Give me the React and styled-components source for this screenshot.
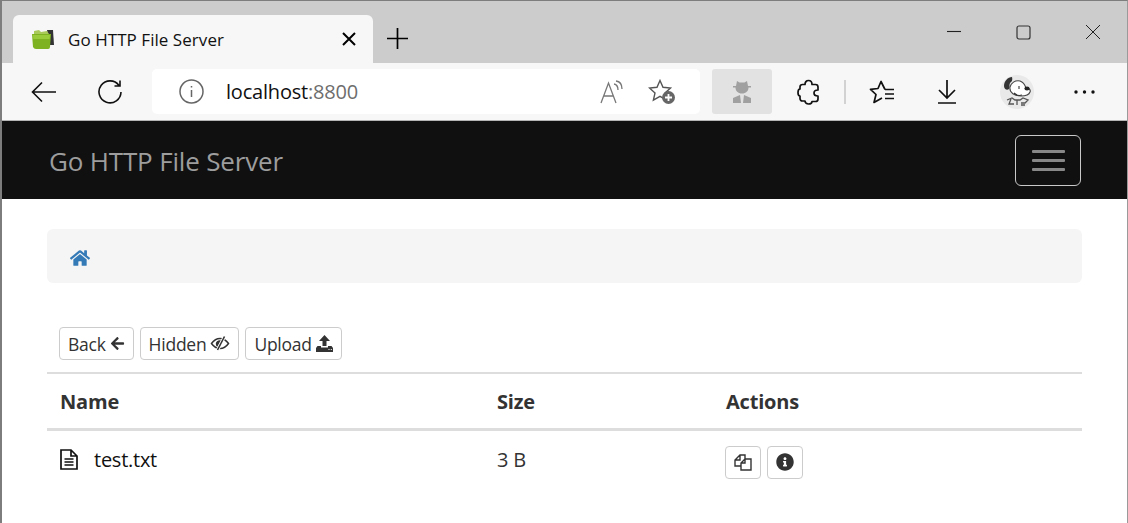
import React from 'react';
import styled, { createGlobalStyle } from 'styled-components';
import { FaHome, FaArrowLeft, FaInfoCircle } from 'react-icons/fa';

const Global = createGlobalStyle`
  html, body { margin: 0; padding: 0; background: #fff; }
  body { font-family: "Open Sans", "Noto Sans", sans-serif; overflow: hidden; }
`;

const Win = styled.div`
  width: 1128px;
  height: 523px;
  box-sizing: border-box;
  border-left: 2px solid #7d7d7d;
  border-top: 1px solid #7d7d7d;
  border-right: 1px solid #9a9a9a;
  display: flex;
  flex-direction: column;
  overflow: hidden;
`;

const TabStrip = styled.div`
  height: 62px;
  flex: none;
  background: #cccccc;
  display: flex;
  align-items: flex-end;
  padding-left: 11px;
  box-sizing: border-box;
`;

const Tab = styled.div`
  width: 360px;
  height: 48px;
  background: #f7f7f7;
  border-radius: 6px 6px 0 0;
  display: flex;
  align-items: center;
  padding: 0 17px 0 18px;
  box-sizing: border-box;
`;

const TabTitle = styled.span`
  flex: 1;
  margin-left: 13px;
  font-size: 17px;
  letter-spacing: 0.05px;
  color: #111;
`;

const NewTab = styled.div`
  margin: 0 0 7px 14px;
  height: 36px;
  display: flex;
  align-items: center;
`;

const WinControls = styled.div`
  margin-left: auto;
  align-self: flex-start;
  display: flex;
  gap: 54px;
  padding: 23px 26px 0 0;
  align-items: center;
`;

const Toolbar = styled.div`
  height: 57px;
  flex: none;
  background: #f7f7f7;
  border-bottom: 1px solid #b5b5b5;
  display: flex;
  align-items: center;
`;

const NavIcons = styled.div`
  width: 150px;
  flex: none;
  display: flex;
  align-items: center;
  gap: 40px;
  padding-left: 29px;
  box-sizing: border-box;
`;

const Address = styled.div`
  width: 548px;
  height: 45px;
  background: #fff;
  border-radius: 5px;
  display: flex;
  align-items: center;
  padding: 0 25px 0 27px;
  box-sizing: border-box;
`;

const Url = styled.span`
  flex: 1;
  margin-left: 22px;
  font-size: 20px;
  letter-spacing: -0.2px;
  color: #111;
  & > em { font-style: normal; color: #6d6d6d; }
`;

const AddrIcons = styled.div`
  display: flex;
  gap: 24px;
  align-items: center;
`;

const Incognito = styled.div`
  width: 60px;
  height: 45px;
  margin-left: 12px;
  background: #e2e2e2;
  border-radius: 3px;
  display: flex;
  align-items: center;
  justify-content: center;
`;

const ToolIcons = styled.div`
  display: flex;
  align-items: center;
  margin-left: 25px;
`;

const Divider = styled.div`
  width: 2px;
  height: 24px;
  background: #d2d2d2;
  margin: 0 23px 0 23px;
`;

const ToolSlot = styled.span`
  display: flex;
  align-items: center;
  margin-left: ${p => p.$ml};
`;

const Navbar = styled.div`
  height: 78px;
  flex: none;
  background: #101010;
  display: flex;
  align-items: center;
  justify-content: space-between;
  padding: 0 46px 0 47px;
`;

const Brand = styled.a`
  margin-top: 2px;
  font-size: 26px;
  letter-spacing: -0.17px;
  color: #9d9d9d;
`;

const Toggle = styled.div`
  width: 66px;
  height: 51px;
  box-sizing: border-box;
  border: 1px solid #c8c8c8;
  border-radius: 6px;
  display: flex;
  flex-direction: column;
  justify-content: center;
  align-items: center;
  gap: 6px;
`;

const Bar = styled.span`
  width: 33px;
  height: 3px;
  border-radius: 1px;
  background: #888;
`;

const Content = styled.div`
  padding: 30px 45px 0;
  flex: 1;
`;

const Crumb = styled.div`
  height: 54px;
  box-sizing: border-box;
  padding: 4px 0 0 23px;
  border-radius: 6px;
  background: #f5f5f5;
  display: flex;
  align-items: center;
  color: #337ab7;
`;

const Actions = styled.div`
  display: flex;
  gap: 6px;
  margin: 44px 0 12px 12px;
`;

const Btn = styled.div`
  height: 33px;
  box-sizing: border-box;
  border: 1px solid #ccc;
  border-radius: 4px;
  background: #fff;
  color: #333;
  font-size: 17.5px;
  letter-spacing: -0.25px;
  display: flex;
  align-items: center;
  gap: 4px;
  padding: 0 8px;
`;

const IconBtn = styled(Btn)`
  width: 36px;
  padding: 0;
  justify-content: center;
`;

const Row = styled.div`
  display: grid;
  grid-template-columns: 437px 229px 1fr;
  align-items: center;
  padding-left: 13px;
  color: #333;
`;

const HeadRow = styled(Row)`
  height: 59px;
  box-sizing: border-box;
  border-top: 2px solid #ddd;
  border-bottom: 3px solid #ddd;
  font-weight: 700;
  font-size: 20px;
  letter-spacing: -0.2px;
`;

const BodyRow = styled(Row)`
  height: 60px;
  font-size: 20px;
  letter-spacing: -0.25px;
`;

const FileName = styled.div`
  display: flex;
  align-items: center;
  gap: 16px;
  padding-bottom: 4px;
  color: #111;
`;

const FileSize = styled.span`
  padding-bottom: 4px;
`;

const Ops = styled.div`
  display: flex;
  gap: 6px;
  margin-left: -1px;
  padding-top: 2px;
`;

const Line = styled.svg.attrs({ fill: 'none', stroke: 'currentColor' })`
  display: block;
  flex: none;
`;

const Solid = styled.svg`
  display: block;
  flex: none;
  fill: currentColor;
`;

const Favicon = () => (
  <svg width="24" height="22" viewBox="0 0 24 22">
    <path d="M16 2h6l1 15h-4z" fill="#333" />
    <path d="M3 3l5-1 2 2 6-1 2 3H3z" fill="#a9c95a" />
    <path d="M1 6h19l-1 13q0 2-2 2H5q-2 0-3-2z" fill="#7fb223" />
    <path d="M2 7h17l-.3 4H2.300z" fill="#9acb3a" />
  </svg>
);

const Snoopy = () => (
  <svg width="34" height="34" viewBox="0 0 34 34">
    <circle cx="17" cy="17" r="17" fill="#e9e9e9" />
    <path d="M10 12c1-4 5-7 10-6 3 1 5 4 6 7 3 0 5 2 4 4-1 3-5 4-9 4-6 0-12-3-11-9z" fill="#fff" stroke="#444" strokeWidth="1.100" />
    <path d="M12 2c-4 0-8 4-8 9 0 3 3 5 5 3 1-2 0-4 1-6 1-1 3-2 2-6z" fill="#333" />
    <ellipse cx="27" cy="13.500" rx="2.600" ry="1.900" fill="#222" />
    <path d="M19 11v3M14 18c2 2 5 3 8 2" fill="none" stroke="#333" strokeWidth="1.100" />
    <path d="M7 25l5-2 3 2 5 0 3-2 5 2-3 3h-4M11 24l-2 5h5M17 25v5M25 30h-4" fill="none" stroke="#555" strokeWidth="1.300" />
  </svg>
);

const App = () => (
  <Win>
    <Global />
    <TabStrip>
      <Tab>
        <Favicon />
        <TabTitle>Go HTTP File Server</TabTitle>
        <Line width="14" height="14" viewBox="0 0 14 14" strokeWidth="2"><path d="M1 1l12 12M13 1L1 13" /></Line>
      </Tab>
      <NewTab>
        <Line width="21" height="21" viewBox="0 0 21 21" strokeWidth="1.700"><path d="M10.500 0v21M0 10.500h21" /></Line>
      </NewTab>
      <WinControls>
        <Line width="16" height="16" viewBox="0 0 16 16" strokeWidth="1.100" color="#222"><path d="M1 7.500h14" /></Line>
        <Line width="15" height="15" viewBox="0 0 15 15" strokeWidth="1.200" color="#333"><rect x="1" y="1" width="13" height="13" rx="2" /></Line>
        <Line width="16" height="16" viewBox="0 0 16 16" strokeWidth="1" color="#222"><path d="M1 1l14 14M15 1L1 15" /></Line>
      </WinControls>
    </TabStrip>
    <Toolbar>
      <NavIcons>
        <Line width="26" height="22" viewBox="0 0 26 22" strokeWidth="1.600" color="#111"><path d="M25 11H2M11 1.500L1.500 11l9.500 9.500" /></Line>
        <Line width="26" height="26" viewBox="0 0 26 26" strokeWidth="1.600" color="#111"><path d="M22 6.500A11 11 0 1 0 24 13M23 1.500V7h-5.500" /></Line>
      </NavIcons>
      <Address>
        <Line width="25" height="25" viewBox="0 0 25 25" strokeWidth="1.500" color="#666"><circle cx="12.500" cy="12.500" r="11.500" /><path d="M12.500 11v7M12.500 7v1.600" /></Line>
        <Url>localhost<em>:8800</em></Url>
        <AddrIcons>
          <Line width="24" height="24" viewBox="0 0 24 24" strokeWidth="1.300" color="#777"><path d="M1 23L8.500 3 16 23M3.500 16h10M14 4c3 .5 4 3 4 6M16 1c4 .5 6 4 6 8" /></Line>
          <svg width="27" height="25" viewBox="0 0 27 25">
            <path d="M12 1.500l3 6.800 7.500.7-5.500 5 1.600 7.200-6.600-3.800-6.600 3.800 1.600-7.200-5.500-5 7.500-.7z" fill="none" stroke="#555" strokeWidth="1.400" />
            <circle cx="20.500" cy="18.500" r="6.500" fill="#666" />
            <path d="M20.500 15v7M17 18.500h7" stroke="#fff" strokeWidth="1.800" />
          </svg>
        </AddrIcons>
      </Address>
      <Incognito>
        <Solid width="22" height="24" viewBox="0 0 22 24" color="#a0a0a0">
          <path d="M6 1l2.500 1.500h5L16 1l1 5h3v1.500h-2.500c0 3.500-2.500 6-6.500 6s-6.500-2.500-6.500-6H2V6h3zM2 23v-5l7-3 1 8zM20 23v-5l-7-3-1 8z" />
        </Solid>
      </Incognito>
      <ToolIcons>
        <Line width="24" height="26" viewBox="0 0 24 26" strokeWidth="1.700" strokeLinejoin="round" color="#111">
          <path d="M8 5.500C8 3 9.500 1.500 11.500 1.500S15 3 15 5.500h3.500c1.500 0 2.500 1 2.500 2.500v3c-2.500 0-4 1-4 3s1.500 3 4 3v3c0 1.500-1 2.500-2.500 2.500H15c0 1.500-1.500 2.500-3.500 2.500S8 23.500 8 22H5.500C4 22 3 21 3 19.500V17c-1 0-2-1.500-2-3.500S2 10 3 10V8c0-1.500 1-2.500 2.500-2.500z" />
        </Line>
        <Divider />
        <Line width="26" height="24" viewBox="0 0 26 24" strokeWidth="1.700" strokeLinejoin="round" color="#111"><path d="M16 9.500L12 1.500 9 8.500 1.500 9.300 7 14.500 5 22.500 13 18M16 9.500h9M16 14h9M16 18.500h9" /></Line>
        <ToolSlot $ml="42px">
          <Line width="20" height="25" viewBox="0 0 20 25" strokeWidth="1.700" color="#111"><path d="M10 1v18M2 11l8 8 8-8M1 24h18" /></Line>
        </ToolSlot>
        <ToolSlot $ml="43px"><Snoopy /></ToolSlot>
        <ToolSlot $ml="40px">
          <Solid width="21" height="4" viewBox="0 0 21 4" color="#111"><circle cx="2" cy="2" r="1.700" /><circle cx="10.500" cy="2" r="1.700" /><circle cx="19" cy="2" r="1.700" /></Solid>
        </ToolSlot>
      </ToolIcons>
    </Toolbar>
    <Navbar>
      <Brand>Go HTTP File Server</Brand>
      <Toggle><Bar /><Bar /><Bar /></Toggle>
    </Navbar>
    <Content>
      <Crumb><FaHome size={20} /></Crumb>
      <Actions>
        <Btn>Back <FaArrowLeft size={15} /></Btn>
        <Btn>
          Hidden
          <svg width="20" height="15" viewBox="0 0 19 15">
            <path d="M1 7.500C3.500 4 6.500 2.500 9.500 2.500s6 1.500 8.500 5c-2.500 3.500-5.500 5-8.500 5S3.500 11 1 7.500z" fill="none" stroke="#333" strokeWidth="1.500" />
            <path d="M10.500 4.500L6.800 11C5 9.500 4.700 6.500 6.500 5.200c1.200-.9 2.700-1 4-.7z" fill="#333" />
            <path d="M14 .5L7 14" stroke="#fff" strokeWidth="3.200" />
            <path d="M14 .5L7 14" stroke="#333" strokeWidth="1.600" />
          </svg>
        </Btn>
        <Btn>
          Upload
          <Solid width="17" height="17" viewBox="0 0 17 17">
            <path d="M8.500 0L14 6h-3.500v5h-4V6H3z" />
            <path d="M1.500 11H5v1.500h7V11h3.500l1.500 2v4H0v-4z" />
            <path d="M12.500 14.500h1M14.800 14.500h1" stroke="#fff" />
          </Solid>
        </Btn>
      </Actions>
      <HeadRow><span>Name</span><span>Size</span><span>Actions</span></HeadRow>
      <BodyRow>
        <FileName>
          <Line width="18" height="21" viewBox="0 0 18 21" strokeWidth="1.700" color="#111">
            <path d="M1 1h10l6 6v13H1zM11 1v6h6M4.500 10h9M4.500 13h9M4.500 16h9" />
          </Line>
          test.txt
        </FileName>
        <FileSize>3 B</FileSize>
        <Ops>
          <IconBtn>
            <Line width="18" height="17" viewBox="0 0 18 17" strokeWidth="1.400" color="#333">
              <path d="M11 5V1H6L1 6v6h6M6 1v5H1M11 5l-4 4v7h10V5zM11 5v4H7" />
            </Line>
          </IconBtn>
          <IconBtn><FaInfoCircle size={18} /></IconBtn>
        </Ops>
      </BodyRow>
    </Content>
  </Win>
);

export default App;
